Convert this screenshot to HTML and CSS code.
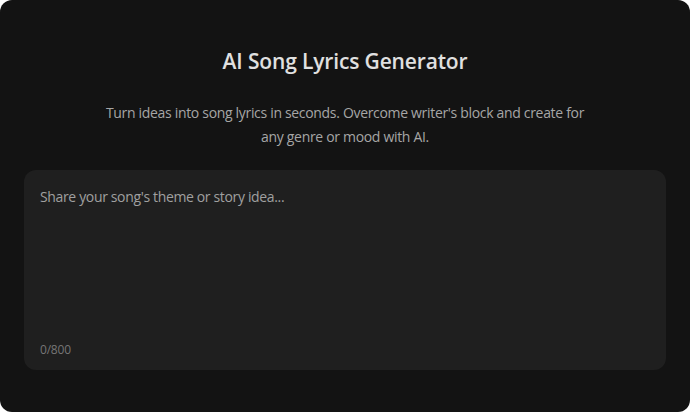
FILE: index.html
```html
<!DOCTYPE html>
<html lang="en">
<head>
<meta charset="utf-8">
<title>AI Song Lyrics Generator</title>
<link rel="stylesheet" href="styles.css">
</head>
<body>
<main class="page">
  <h1 class="title">AI Song Lyrics Generator</h1>
  <p class="subtitle">Turn ideas into song lyrics in seconds. Overcome writer's block and create for any genre or mood with AI.</p>
  <div class="editor">
    <textarea class="input" placeholder="Share your song's theme or story idea..." maxlength="800"></textarea>
    <div class="counter">0/800</div>
  </div>
</main>
</body>
</html>
```
FILE: styles.css
```css
* { box-sizing: border-box; }
html, body { margin: 0; padding: 0; background: #ffffff; }
body { font-family: "Open Sans", "Noto Sans", "Liberation Sans", sans-serif; }
.page {
  width: 690px;
  height: 412px;
  background: #131313;
  border-radius: 12px;
  padding: 46px 24px 0;
  display: flex;
  flex-direction: column;
  align-items: center;
}
.title {
  margin: 0;
  font-size: 21px;
  line-height: 30px;
  font-weight: 600;
  letter-spacing: -0.15px;
  color: #e0e0e0;
  text-align: center;
}
.subtitle {
  margin: 25px 0 0;
  max-width: 490px;
  font-size: 14px;
  line-height: 24px;
  letter-spacing: -0.32px;
  color: #a6a6a6;
  text-align: center;
}
.editor {
  margin-top: 21px;
  width: 100%;
  height: 200px;
  background: #1f1f1f;
  border-radius: 12px;
  padding: 16px 16px 12px;
  display: flex;
  flex-direction: column;
}
.input {
  flex: 1;
  background: transparent;
  border: none;
  outline: none;
  resize: none;
  padding: 0;
  font-family: inherit;
  font-size: 14px;
  line-height: 22px;
  letter-spacing: -0.35px;
  color: #d0d0d0;
}
.input::placeholder { color: #a0a0a0; opacity: 1; }
.counter {
  font-size: 12px;
  line-height: 16px;
  letter-spacing: -0.2px;
  color: #767676;
}
```
